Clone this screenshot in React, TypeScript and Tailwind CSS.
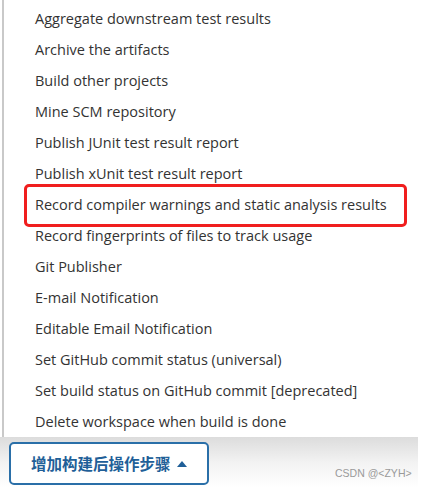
import React from "react";

const items = [
  "Aggregate downstream test results",
  "Archive the artifacts",
  "Build other projects",
  "Mine SCM repository",
  "Publish JUnit test result report",
  "Publish xUnit test result report",
  "Record compiler warnings and static analysis results",
  "Record fingerprints of files to track usage",
  "Git Publisher",
  "E-mail Notification",
  "Editable Email Notification",
  "Set GitHub commit status (universal)",
  "Set build status on GitHub commit [deprecated]",
  "Delete workspace when build is done",
];

export default function App() {
  return (
    <div className="relative w-[422px] h-[487px] bg-white overflow-hidden" style={{ fontFamily: '"Open Sans", "Noto Sans CJK SC", sans-serif' }}>
      <div className="relative w-[416px] ml-[2px] border-l-2 border-[#c9c9c9] bg-white pt-[3px]">
        {items.map((t) => (
          <div key={t} className="h-[31px] flex items-center pl-[31px] text-[14.5px] text-[#333333] whitespace-nowrap">
            {t}
          </div>
        ))}
      </div>
      <div className="absolute left-[24px] top-[184px] w-[383px] h-[43px] border-[3px] border-[#f01e1e] rounded-[5px]" />
      <div className="h-[50px] bg-gradient-to-b from-[#dcdcdc] via-[#f2f2f2] to-white w-[418px]">
        <div className="pt-[5px] pl-[9px]">
          <button className="w-[200px] h-[43px] border-2 border-[#2a6fa8] rounded-[5px] bg-white flex items-center pl-[20px] gap-[6px] text-[#1f5f98] text-[15.5px] font-bold">
            <span style={{ fontFamily: '"Noto Sans CJK SC", sans-serif' }}>增加构建后操作步骤</span>
            <svg width="10" height="6" viewBox="0 0 10 6"><path d="M0 6 L5 0 L10 6 Z" fill="#1f5f98" /></svg>
          </button>
        </div>
      </div>
      <div className="absolute left-[335px] top-[466px] text-[10.5px] text-[#9a9a9a]" style={{ fontFamily: '"Liberation Sans", sans-serif' }}>
        CSDN @&lt;ZYH&gt;
      </div>
    </div>
  );
}
